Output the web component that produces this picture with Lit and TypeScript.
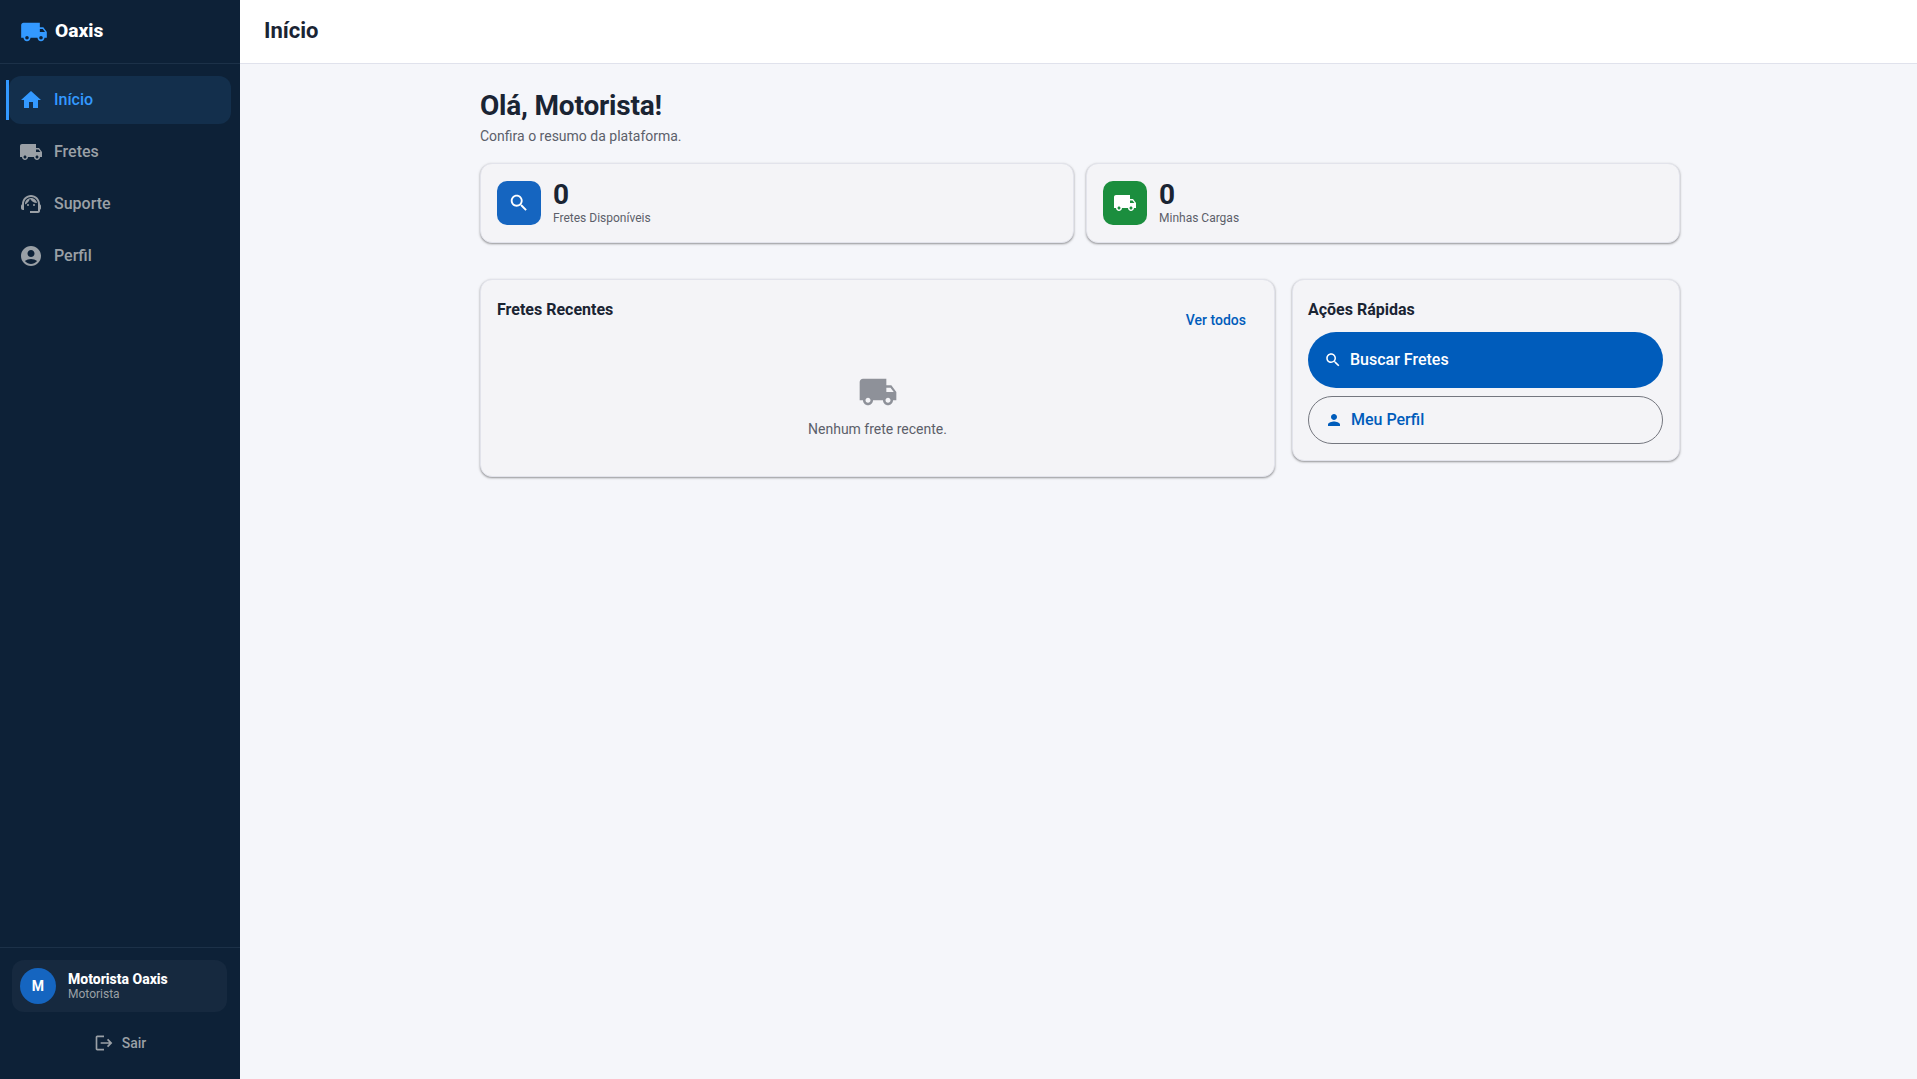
import { LitElement, html, css, svg } from "lit";
import { customElement } from "lit/decorators.js";

const P: Record<string, any> = {
  truck: svg`<path d="M20 8h-3V4H3c-1.1 0-2 .9-2 2v11h2c0 1.66 1.34 3 3 3s3-1.34 3-3h6c0 1.66 1.34 3 3 3s3-1.34 3-3h2v-5l-3-4zM6 18.5c-.83 0-1.5-.67-1.5-1.5s.67-1.5 1.5-1.5 1.5.67 1.5 1.5-.67 1.5-1.5 1.5zm13.5-9l1.96 2.5H17V9.5h2.5zm-1.5 9c-.83 0-1.5-.67-1.5-1.5s.67-1.5 1.5-1.5 1.5.67 1.5 1.5-.67 1.5-1.5 1.5z"/>`,
  home: svg`<path d="M10 20v-6h4v6h5v-8h3L12 3 2 12h3v8z"/>`,
  search: svg`<path d="M15.5 14h-.79l-.28-.27C15.41 12.59 16 11.11 16 9.5 16 5.91 13.09 3 9.5 3S3 5.91 3 9.5 5.91 16 9.5 16c1.61 0 3.09-.59 4.23-1.57l.27.28v.79l5 4.99L20.49 19l-4.99-5zm-6 0C7.01 14 5 11.99 5 9.5S7.01 5 9.5 5 14 7.01 14 9.5 11.99 14 9.5 14z"/>`,
  account: svg`<path d="M12 2C6.48 2 2 6.48 2 12s4.48 10 10 10 10-4.48 10-10S17.52 2 12 2zm0 4c1.93 0 3.5 1.57 3.5 3.5S13.93 13 12 13s-3.5-1.57-3.5-3.5S10.07 6 12 6zm0 14c-2.03 0-4.43-.82-6.14-2.88C7.55 15.8 9.68 15 12 15s4.45.8 6.14 2.12C16.43 19.18 14.03 20 12 20z"/>`,
  person: svg`<path d="M12 12c2.21 0 4-1.79 4-4s-1.79-4-4-4-4 1.79-4 4 1.79 4 4 4zm0 2c-2.67 0-8 1.34-8 4v2h16v-2c0-2.66-5.33-4-8-4z"/>`,
  logout: svg`<path d="M17 7l-1.41 1.41L18.17 11H8v2h10.17l-2.58 2.58L17 17l5-5zM4 5h8V3H4c-1.1 0-2 .9-2 2v14c0 1.1.9 2 2 2h8v-2H4V5z"/>`,
  support: svg`<path d="M21 12.22C21 6.73 16.74 3 12 3c-4.69 0-9 3.65-9 9.28-.6.34-1 .98-1 1.72v2c0 1.1.9 2 2 2h1v-6.1c0-3.87 3.13-7 7-7s7 3.13 7 7V19h-8v2h8c1.1 0 2-.9 2-2v-1.22c.59-.31 1-.92 1-1.61v-2.3c0-.67-.41-1.28-1-1.65z"/><circle cx="9" cy="13" r="1"/><circle cx="15" cy="13" r="1"/><path d="M18 11.03C17.52 8.18 15.04 6 12.05 6c-3.03 0-6.29 2.51-6.03 6.45 2.47-1.01 4.33-3.21 4.86-5.89 1.31 2.63 4 4.44 7.12 4.47z"/>`,
};

const icon = (name: string, cls = "") =>
  html`<svg class="ic ${cls}" viewBox="0 0 24 24" fill="currentColor" aria-hidden="true">${P[name]}</svg>`;

const NAV = [
  { label: "Início", icon: "home", active: true },
  { label: "Fretes", icon: "truck", active: false },
  { label: "Suporte", icon: "support", active: false },
  { label: "Perfil", icon: "account", active: false },
];

@customElement("app-root")
export class AppRoot extends LitElement {
  static styles = css`
    :host {
      display: flex;
      height: 100vh;
      font-family: Roboto, "Liberation Sans", sans-serif;
      color: #1a2433;
      background: #f5f6fa;
      overflow: hidden;
    }
    .ic { display: block; flex: none; width: 24px; height: 24px; }
    .sidebar {
      width: 240px;
      flex: none;
      background: #0d2137;
      display: flex;
      flex-direction: column;
      color: #9aa0a6;
    }
    .brand {
      height: 63px;
      flex: none;
      display: flex;
      align-items: center;
      gap: 7px;
      padding-left: 20px;
      border-bottom: 1px solid #1c3148;
    }
    .brand .ic { width: 28px; height: 28px; color: #3399ff; }
    .brand span { color: #fff; font-size: 19.2px; font-weight: 800; margin-bottom: 2px; }
    nav { flex: 1; display: flex; flex-direction: column; gap: 4px; padding: 12px 9px 0 9px; }
    .item {
      position: relative;
      height: 48px;
      display: flex;
      align-items: center;
      gap: 11px;
      padding-left: 10px;
      border-radius: 12px;
      font-size: 16px;
      font-weight: 500;
      padding-bottom: 1px;
      box-sizing: border-box;
    }
    .item.active { background: #132f4c; color: #3399ff; }
    .item.active::before {
      content: "";
      position: absolute;
      left: -3px;
      top: 4px;
      bottom: 4px;
      width: 3px;
      background: #3399ff;
    }
    .foot { border-top: 1px solid #1c3148; padding: 12px 12px 0 12px; height: 132px; box-sizing: border-box; }
    .user {
      height: 52px;
      box-sizing: border-box;
      display: flex;
      align-items: center;
      gap: 12px;
      padding-left: 8px;
      background: #16293f;
      border-radius: 12px;
      margin-right: 1px;
    }
    .avatar {
      width: 36px;
      height: 36px;
      border-radius: 50%;
      background: #1565c0;
      color: #fff;
      display: flex;
      align-items: center;
      justify-content: center;
      font-size: 14px;
      font-weight: 700;
    }
    .uname { color: #fff; font-size: 14px; font-weight: 800; line-height: 16px; }
    .urole { font-size: 12px; line-height: 15px; }
    .sair {
      display: flex;
      align-items: center;
      justify-content: center;
      gap: 8px;
      height: 40px;
      margin-top: 11px;
      font-size: 14px;
      font-weight: 500;
    }
    .sair .ic { width: 20px; height: 20px; }
    .main { flex: 1; min-width: 0; display: flex; flex-direction: column; }
    header {
      flex: none;
      box-sizing: border-box;
      height: 64px;
      background: #fff;
      border-bottom: 1px solid #e0e2ec;
      display: flex;
      align-items: center;
      padding: 0 0 2px 24px;
      font-size: 22px;
      font-weight: 700;
      color: #1a2433;
    }
    .content { width: 1200px; margin-left: 240px; padding-top: 24px; }
    h1 { margin: 0; font-size: 28px; line-height: 36px; font-weight: 700; letter-spacing: -0.2px; color: #1a2433; }
    .sub { margin: 2px 0 0; font-size: 14px; line-height: 20px; color: #5c5f6a; }
    .card {
      background: #f4f4f7;
      border: 1px solid #e2e3eb;
      border-radius: 12px;
      box-sizing: border-box;
      box-shadow: 0 1px 2px rgba(0, 0, 0, 0.35), 0 1px 3px 1px rgba(0, 0, 0, 0.05);
    }
    .stats { display: grid; grid-template-columns: 1fr 1fr; gap: 12px; margin-top: 17px; }
    .stat { height: 80px; display: flex; align-items: center; gap: 12px; padding-left: 16px; }
    .badge {
      width: 44px;
      height: 44px;
      border-radius: 10px;
      color: #fff;
      display: flex;
      align-items: center;
      justify-content: center;
    }
    .badge .small { width: 22px; height: 22px; }
    .blue { background: #1565c0; }
    .green { background: #1b8e3e; }
    .num { font-size: 28px; font-weight: 700; line-height: 30px; color: #1a2433; }
    .lbl { font-size: 12px; line-height: 16px; color: #5c5f6a; }
    .row { display: grid; grid-template-columns: 1fr 388px; gap: 17px; margin-top: 36px; align-items: start; }
    .title { font-size: 16px; font-weight: 700; line-height: 24px; color: #1a2433; }
    .recent { height: 198px; padding: 18px 16px 0 16px; }
    .rhead { display: flex; justify-content: space-between; align-items: flex-start; }
    .more { font-size: 14px; font-weight: 500; color: #005cbb; margin: 14px 12px 0 0; line-height: 16px; }
    .empty { display: flex; flex-direction: column; align-items: center; margin-top: 44px; }
    .empty .ic { width: 40px; height: 40px; color: #8e9199; }
    .empty p { margin: 7px 0 0; font-size: 14px; line-height: 20px; color: #5c5f6a; }
    .quick { height: 182px; padding: 18px 16px 0 15px; }
    .btn {
      display: flex;
      align-items: center;
      box-sizing: border-box;
      border-radius: 28px;
      font-size: 16px;
      font-weight: 500;
      padding-bottom: 1px;
    }
    .btn .ic { width: 18px; height: 18px; }
    .fill { height: 56px; margin-top: 10px; background: #005cbb; color: #fff; gap: 8px; padding-left: 16px; }
    .outline { height: 48px; margin-top: 8px; border: 1px solid #74777f; color: #005cbb; gap: 8px; padding-left: 16px; }
  `;

  render() {
    return html`
      <aside class="sidebar">
        <div class="brand">${icon("truck")}<span>Oaxis</span></div>
        <nav>
          ${NAV.map(
            (n) => html`<div class="item ${n.active ? "active" : ""}">${icon(n.icon)}<span>${n.label}</span></div>`
          )}
        </nav>
        <div class="foot">
          <div class="user">
            <div class="avatar">M</div>
            <div>
              <div class="uname">Motorista Oaxis</div>
              <div class="urole">Motorista</div>
            </div>
          </div>
          <div class="sair">${icon("logout")}<span>Sair</span></div>
        </div>
      </aside>
      <div class="main">
        <header>Início</header>
        <div class="content">
          <h1>Olá, Motorista!</h1>
          <p class="sub">Confira o resumo da plataforma.</p>
          <div class="stats">
            <div class="card stat">
              <div class="badge blue">${icon("search", "small")}</div>
              <div><div class="num">0</div><div class="lbl">Fretes Disponíveis</div></div>
            </div>
            <div class="card stat">
              <div class="badge green">${icon("truck")}</div>
              <div><div class="num">0</div><div class="lbl">Minhas Cargas</div></div>
            </div>
          </div>
          <div class="row">
            <section class="card recent">
              <div class="rhead"><div class="title">Fretes Recentes</div><div class="more">Ver todos</div></div>
              <div class="empty">${icon("truck")}<p>Nenhum frete recente.</p></div>
            </section>
            <section class="card quick">
              <div class="title">Ações Rápidas</div>
              <div class="btn fill">${icon("search")}<span>Buscar Fretes</span></div>
              <div class="btn outline">${icon("person")}<span>Meu Perfil</span></div>
            </section>
          </div>
        </div>
      </div>
    `;
  }
}
